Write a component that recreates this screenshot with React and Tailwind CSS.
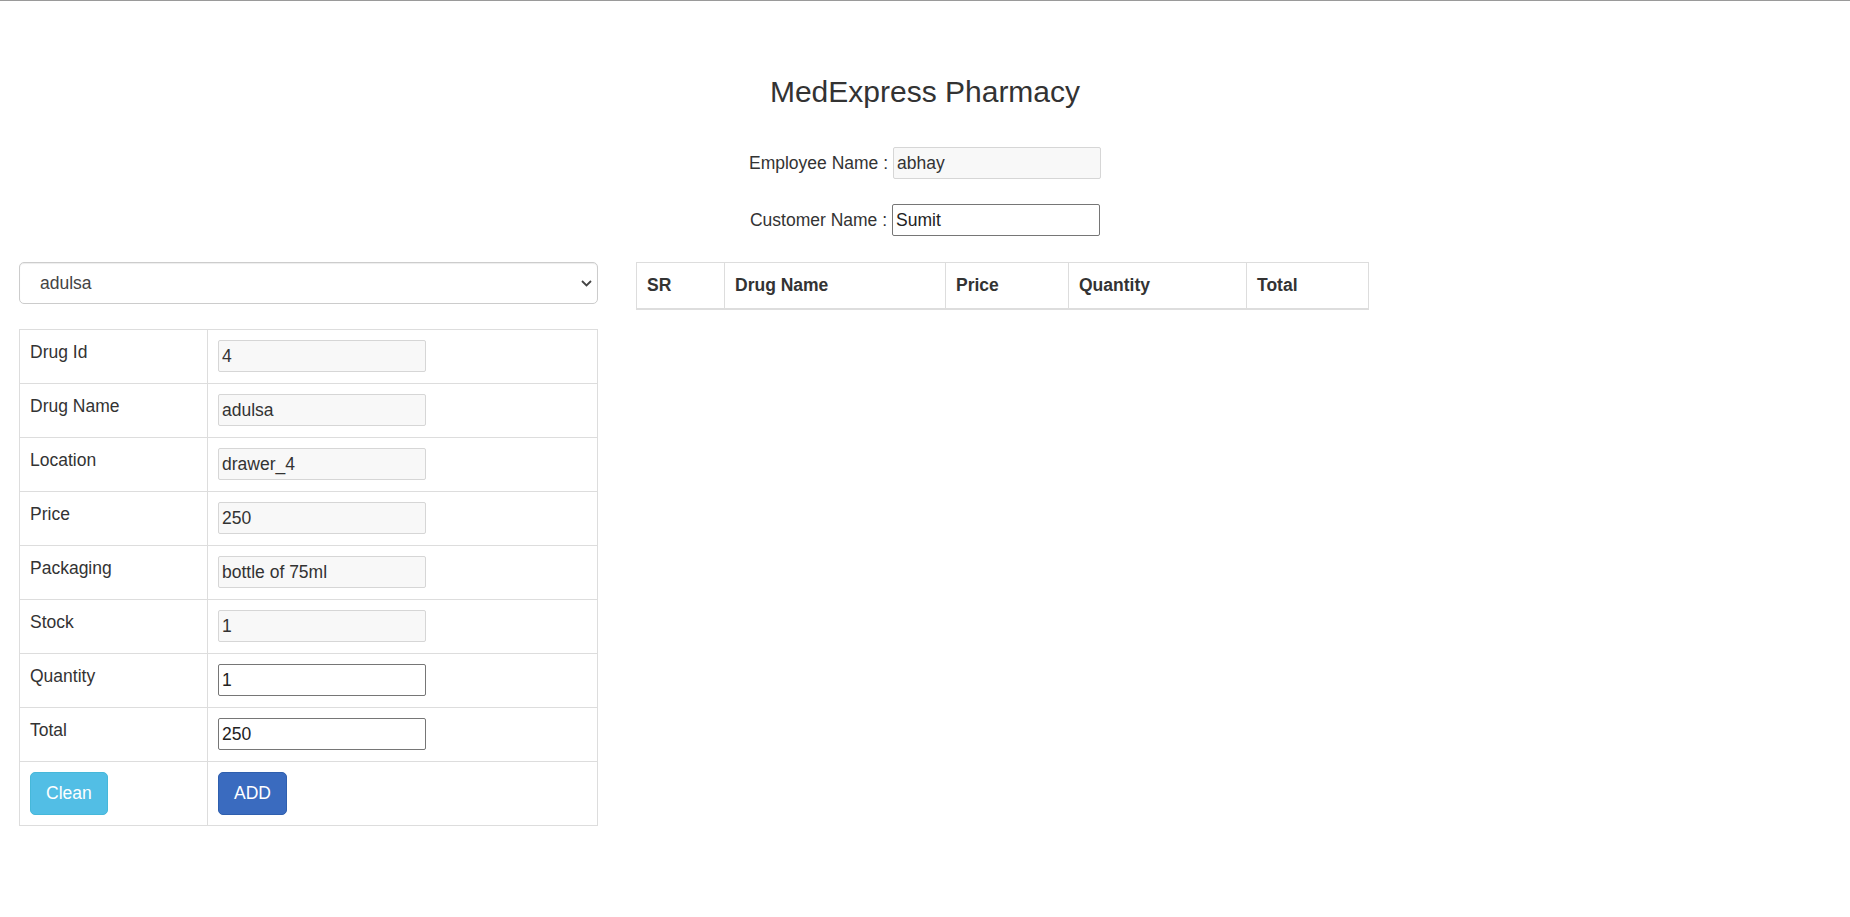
import React from "react";

const rows = [
  { label: "Drug Id", value: "4", ro: true },
  { label: "Drug Name", value: "adulsa", ro: true },
  { label: "Location", value: "drawer_4", ro: true },
  { label: "Price", value: "250", ro: true },
  { label: "Packaging", value: "bottle of 75ml", ro: true },
  { label: "Stock", value: "1", ro: true },
  { label: "Quantity", value: "1", ro: false },
  { label: "Total", value: "250", ro: false },
];

function Field({ value, ro }) {
  return (
    <input
      readOnly
      value={value}
      className={
        ro
          ? "w-[208px] h-[32px] px-[3px] border border-[#d6d6d6] bg-[#f8f8f8] rounded-[2px] text-[17.5px] text-[#333] outline-none"
          : "w-[208px] h-[32px] px-[3px] border border-[#767676] bg-white rounded-[2px] text-[17.5px] text-[#222] outline-none"
      }
    />
  );
}

export default function App() {
  return (
    <div className="min-h-screen bg-white font-['Liberation_Sans',Arial,sans-serif] text-[17.5px] leading-[25px] text-[#333]">
      <div className="h-[1px] bg-[#9a9a9a]" />
      <h2 className="mt-[74px] text-center text-[30px] leading-[33px] font-normal text-[#333]">
        MedExpress Pharmacy
      </h2>

      <div className="mt-[39px] flex h-[32px] items-center justify-center gap-[5px]">
        <span>Employee Name :</span>
        <Field value="abhay" ro />
      </div>
      <div className="mt-[25px] flex h-[32px] items-center justify-center gap-[5px]">
        <span>Customer Name :</span>
        <Field value="Sumit" ro={false} />
      </div>

      <div className="mt-[26px] flex items-start gap-[38px] pl-[19px]">
        {/* left column */}
        <div className="w-[579px]">
          <div className="relative">
            <select
              defaultValue="adulsa"
              className="h-[42px] w-full appearance-none rounded-[5px] border border-[#cccccc] bg-white pl-[20px] text-[17.5px] text-[#444] shadow-[inset_0_1px_1px_rgba(0,0,0,0.075)] outline-none"
            >
              <option value="adulsa">adulsa</option>
            </select>
            <svg
              className="pointer-events-none absolute right-[6px] top-[18px]"
              width="11"
              height="7"
              viewBox="0 0 11 7"
              fill="none"
            >
              <polyline points="1,1 5.5,5.5 10,1" stroke="#444" strokeWidth="1.8" />
            </svg>
          </div>

          <div className="mt-[25px] border-x border-b border-[#dddddd]">
            {rows.map((r) => (
              <div key={r.label} className="flex h-[54px] border-t border-[#dddddd]">
                <div className="w-[188px] border-r border-[#dddddd] px-[10px] pt-[10px]">{r.label}</div>
                <div className="flex-1 pl-[10px] pt-[10px]">
                  <Field value={r.value} ro={r.ro} />
                </div>
              </div>
            ))}
            <div className="flex h-[64px] border-t border-[#dddddd]">
              <div className="w-[188px] border-r border-[#dddddd] px-[10px] pt-[10px]">
                <button className="h-[43px] rounded-[5px] border border-[#46b8da] bg-[#52bee5] px-[15px] text-[17.5px] leading-[25px] text-white">
                  Clean
                </button>
              </div>
              <div className="flex-1 pl-[10px] pt-[10px]">
                <button className="h-[43px] rounded-[5px] border border-[#2f5fae] bg-[#3a6bbf] px-[15px] text-[17.5px] leading-[25px] text-white">
                  ADD
                </button>
              </div>
            </div>
          </div>
        </div>

        {/* right column */}
        <div className="w-[733px]">
          <div className="flex border-x border-t border-b-2 border-[#dddddd] font-bold">
            <div className="w-[87px] p-[10px]">SR</div>
            <div className="w-[221px] border-l border-[#dddddd] p-[10px]">Drug Name</div>
            <div className="w-[123px] border-l border-[#dddddd] p-[10px]">Price</div>
            <div className="w-[178px] border-l border-[#dddddd] p-[10px]">Quantity</div>
            <div className="w-[122px] border-l border-[#dddddd] p-[10px]">Total</div>
          </div>
        </div>
      </div>
    </div>
  );
}
